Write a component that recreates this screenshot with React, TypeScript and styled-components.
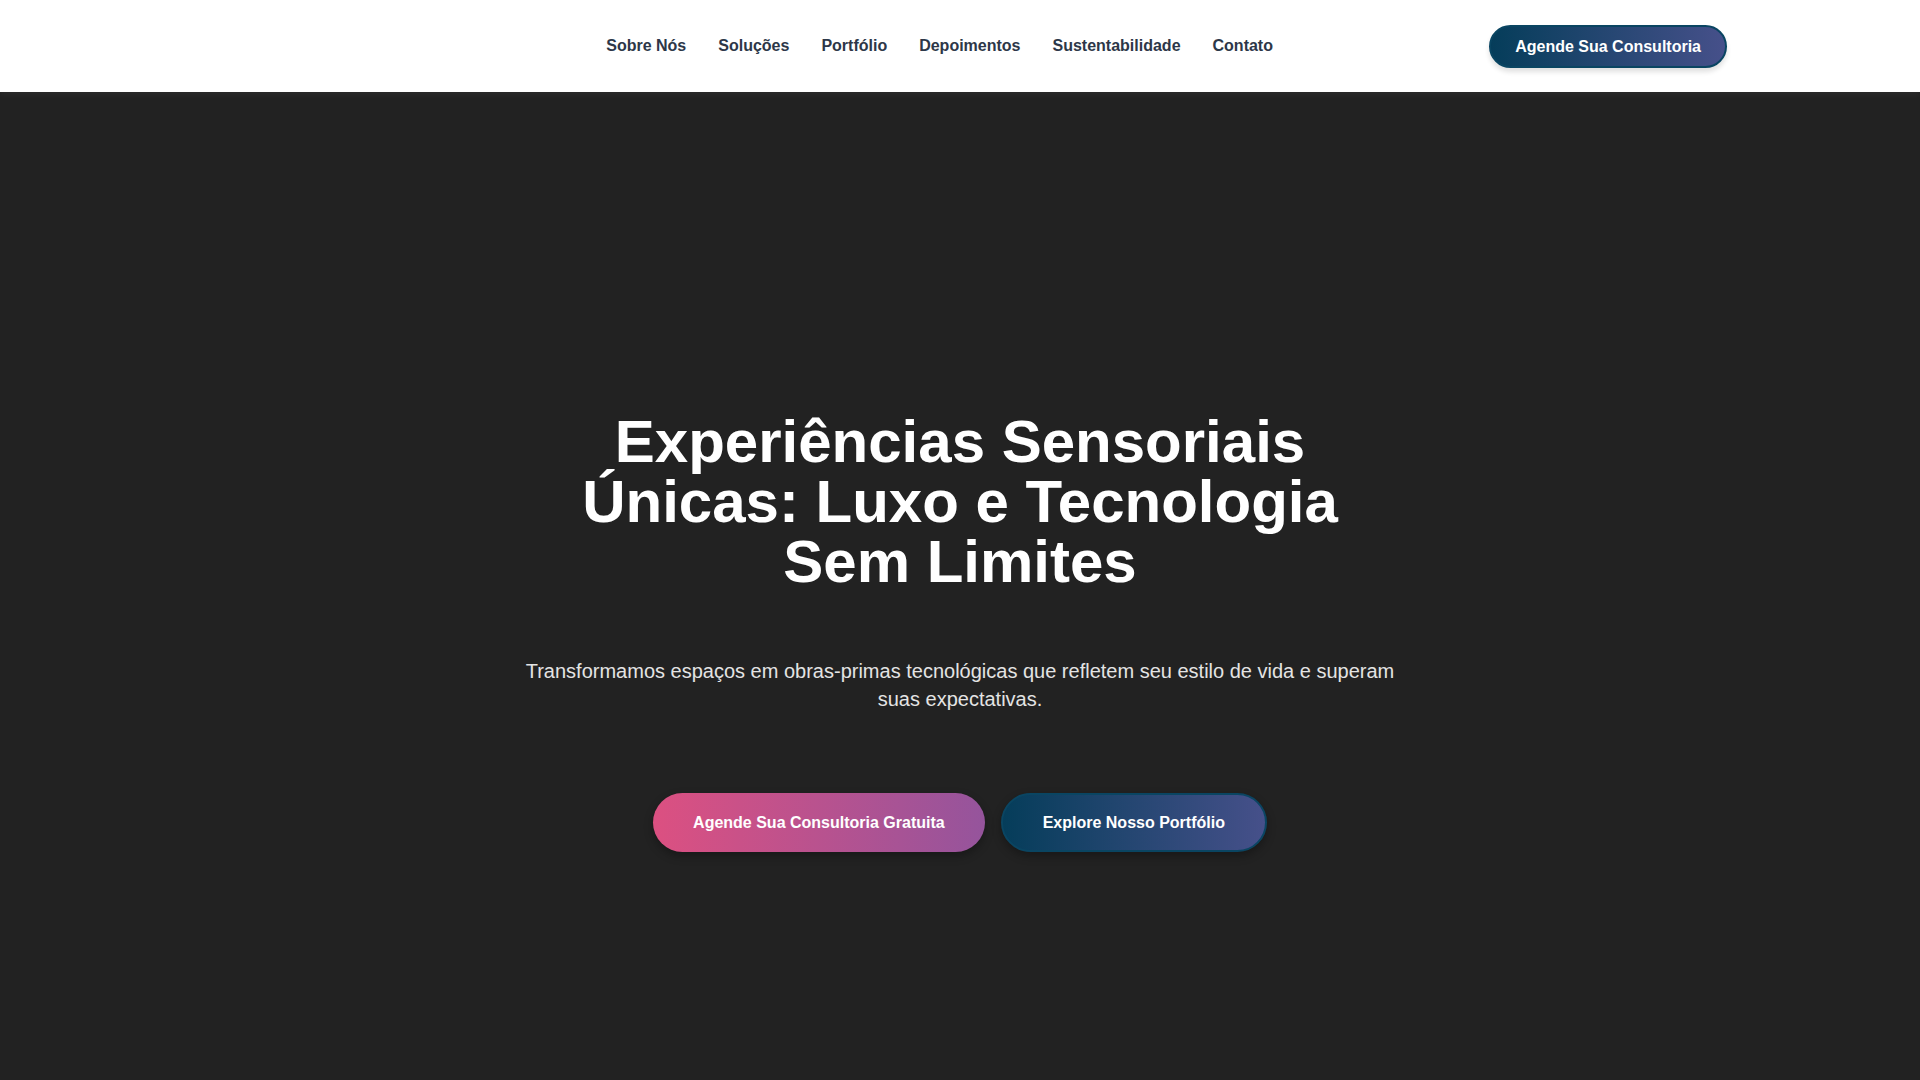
import React from 'react';
import styled, { createGlobalStyle } from 'styled-components';

const GlobalStyle = createGlobalStyle`
    * {
        box-sizing: border-box;
    }

    html, body {
        margin: 0;
        padding: 0;
        background: #222222;
        font-family: "Liberation Sans", Arial, sans-serif;
    }

    ::-webkit-scrollbar {
        width: 10px;
    }

    ::-webkit-scrollbar-track {
        background: #ffffff;
    }

    ::-webkit-scrollbar-thumb {
        background: #111111;
        border-radius: 5px;
        border: 2px solid #ffffff;
    }
`;

const Header = styled.header`
    position: sticky;
    top: 0;
    z-index: 10;
    height: 92px;
    background: #ffffff;
    box-shadow: 0 2px 8px rgba(255, 255, 255, 0.05);
`;

const HeaderInner = styled.div`
    max-width: 1534px;
    height: 100%;
    margin: 0 auto;
    display: flex;
    align-items: center;
    justify-content: space-between;
`;

const Logo = styled.a`
    display: block;
    width: 197px;
    height: 40px;
`;

const Nav = styled.nav`
    display: flex;
    align-items: center;
    gap: 32px;
`;

const NavLink = styled.a`
    color: #2d3748;
    font-size: 16px;
    font-weight: 700;
    text-decoration: none;
    cursor: pointer;
    transition: color 0.2s ease;

    &:hover {
        color: #d9507e;
    }
`;

const PillButton = styled.a<{ $variant: 'pink' | 'blue'; $size?: 'sm' | 'lg' }>`
    display: inline-flex;
    align-items: center;
    justify-content: center;
    border-radius: 999px;
    color: #ffffff;
    font-size: 16px;
    font-weight: 700;
    line-height: 19px;
    text-decoration: none;
    cursor: pointer;
    white-space: nowrap;
    padding: ${p => (p.$size === 'sm' ? '10px 24px' : p.$variant === 'blue' ? '18px 40px' : '20px 40px')};
    border: ${p => (p.$variant === 'blue' ? '2px solid #0a4562' : 'none')};
    background: ${p =>
        p.$variant === 'pink'
            ? 'linear-gradient(90deg, #dc5081 0%, #95549c 100%)'
            : 'linear-gradient(90deg, #053d5a 0%, #46508a 100%)'};
    box-shadow: ${p => (p.$size === 'sm' ? '0 4px 5px rgba(0, 0, 0, 0.12)' : '0 4px 10px rgba(0, 0, 0, 0.3)')};
`;

const Hero = styled.section`
    min-height: 100vh;
    background: #222222;
    display: flex;
    align-items: center;
    justify-content: center;
    padding: 0 24px;
`;

const HeroContent = styled.div`
    max-width: 900px;
    display: flex;
    flex-direction: column;
    align-items: center;
    text-align: center;
`;

const Title = styled.h1`
    max-width: 800px;
    margin: 0 0 65px;
    color: #ffffff;
    font-size: 60px;
    font-weight: 700;
    line-height: 60px;
`;

const Lead = styled.p`
    margin: 0 0 80px;
    color: #e4e4e4;
    font-size: 20px;
    line-height: 28px;
`;

const Actions = styled.div`
    display: flex;
    gap: 16px;
    justify-content: center;
`;

const links = ['Sobre Nós', 'Soluções', 'Portfólio', 'Depoimentos', 'Sustentabilidade', 'Contato'];

export default function App() {
    return (
        <>
            <GlobalStyle />
            <Header>
                <HeaderInner>
                    <Logo aria-label="Início" />
                    <Nav>
                        {links.map(link => (
                            <NavLink key={link}>{link}</NavLink>
                        ))}
                    </Nav>
                    <PillButton $variant="blue" $size="sm">Agende Sua Consultoria</PillButton>
                </HeaderInner>
            </Header>
            <Hero>
                <HeroContent>
                    <Title>Experiências Sensoriais Únicas: Luxo e Tecnologia Sem Limites</Title>
                    <Lead>
                        Transformamos espaços em obras-primas tecnológicas que refletem seu estilo de vida e superam
                        suas expectativas.
                    </Lead>
                    <Actions>
                        <PillButton $variant="pink">Agende Sua Consultoria Gratuita</PillButton>
                        <PillButton $variant="blue">Explore Nosso Portfólio</PillButton>
                    </Actions>
                </HeroContent>
            </Hero>
        </>
    );
}
